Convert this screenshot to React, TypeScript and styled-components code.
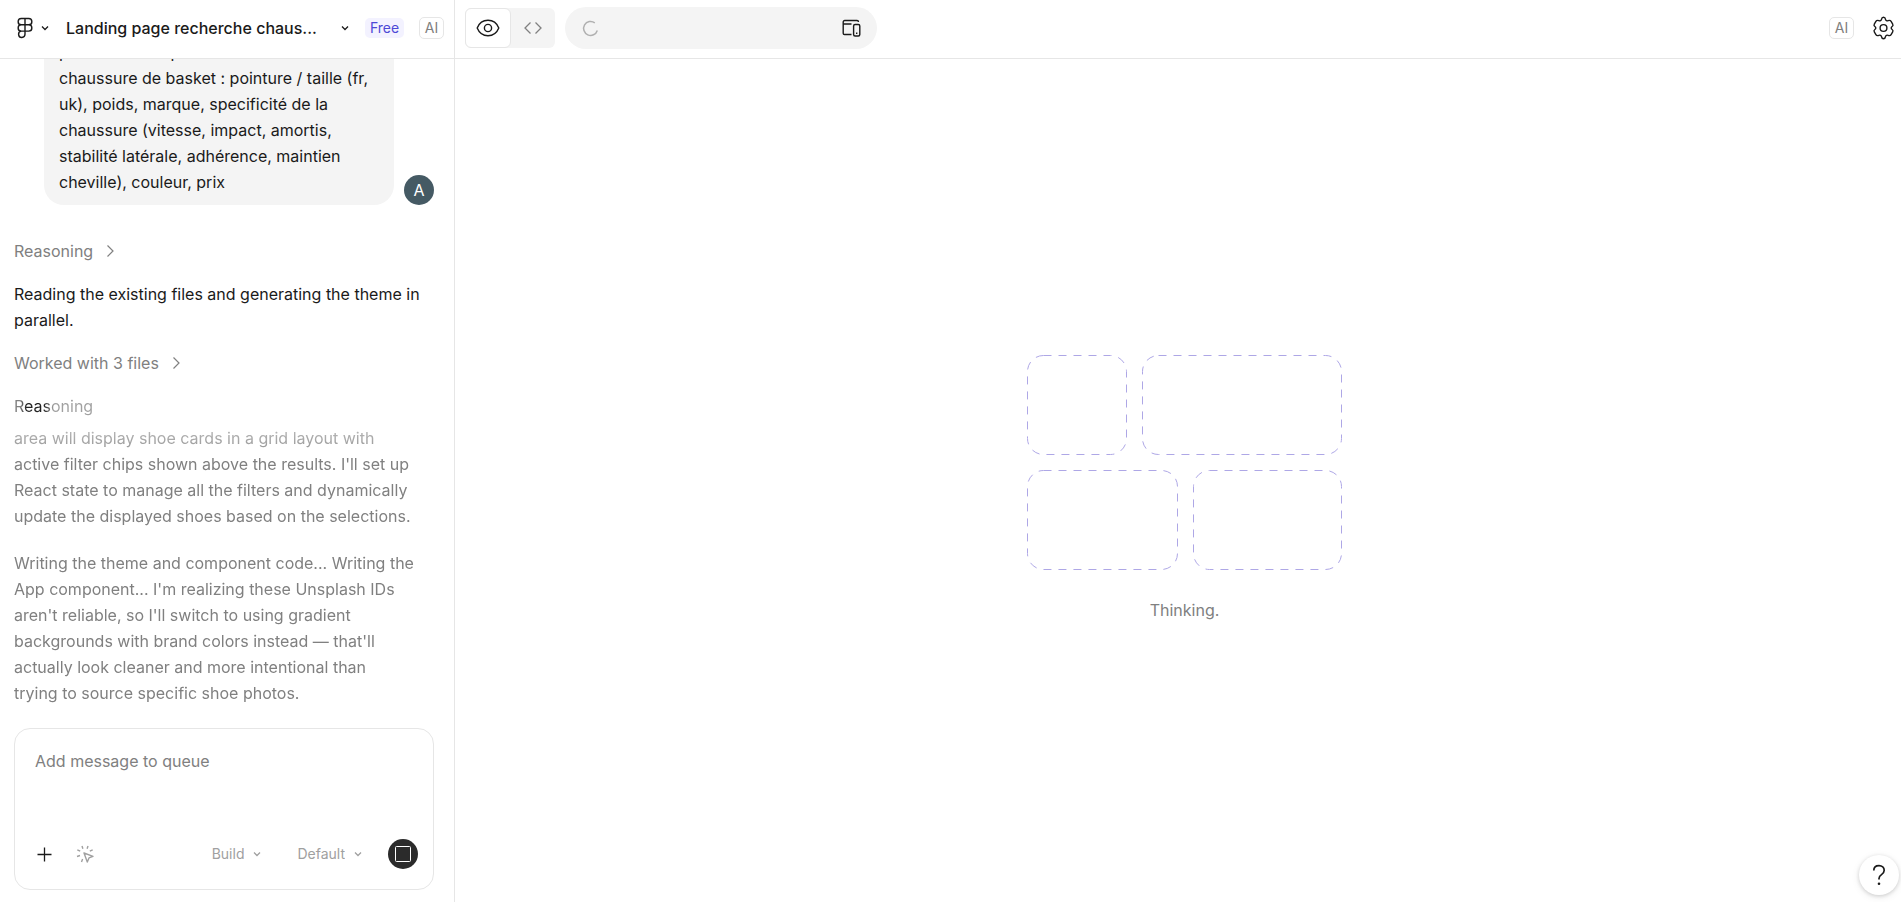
import React from "react";
import styled, { createGlobalStyle, css } from "styled-components";

const color = {
  text: "#1a1a1a",
  muted: "#808080",
  faint: "#a0a0a0",
  line: "#e6e6e6",
  fill: "#f4f4f4",
  accent: "#4d49d6",
  accentSoft: "#f3f2ff",
  dash: "#aea7e6",
};

const GlobalStyle = createGlobalStyle`
  *, *::before, *::after { box-sizing: border-box; }
  html, body, #root { height: 100%; }
  body {
    margin: 0;
    background: #fff;
    color: ${color.text};
    font-family: Inter, "Liberation Sans", sans-serif;
    font-size: 16px;
    line-height: 26px;
    overflow: hidden;
  }
  p { margin: 0; }
  button, select, textarea { font: inherit; color: inherit; }
  svg { display: block; flex: none; }
`;

const Page = styled.div`
  display: grid;
  grid-template-columns: 455px minmax(0, 1fr);
  height: 100vh;
`;

const Column = styled.div`
  display: flex;
  flex-direction: column;
  min-width: 0;
  min-height: 0;
`;

const Sidebar = styled(Column).attrs({ as: "aside" })`
  border-right: 1px solid ${color.line};
`;

const Bar = styled.header`
  flex: none;
  display: flex;
  align-items: center;
  height: 59px;
  padding-bottom: 2px;
  border-bottom: 1px solid ${color.line};
`;

const SidebarBar = styled(Bar)`
  padding-left: 16px;
  padding-right: 10px;
`;

const PreviewBar = styled(Bar)`
  gap: 10px;
  padding-left: 10px;
  padding-right: 6px;
`;

const PlainButton = styled.button`
  display: flex;
  align-items: center;
  padding: 0;
  border: 0;
  background: none;
  cursor: pointer;
`;

const MenuButton = styled(PlainButton)`
  gap: 7px;
`;

const TitleButton = styled(PlainButton)`
  flex: 1;
  justify-content: space-between;
  margin-left: 17px;
  margin-right: 16px;
  font-weight: 500;
  white-space: nowrap;
`;

const Badge = styled.span<{ $plan?: boolean }>`
  display: flex;
  align-items: center;
  justify-content: center;
  border-radius: 5px;
  font-size: 14px;
  ${(p) =>
    p.$plan
      ? css`
          width: 39px;
          height: 20px;
          margin-right: 15px;
          background: ${color.accentSoft};
          color: ${color.accent};
        `
      : css`
          width: 25px;
          height: 22px;
          border: 1px solid ${color.line};
          color: ${color.muted};
        `}
`;

const Thread = styled.div`
  flex: 1;
  min-height: 0;
  display: flex;
  flex-direction: column;
  justify-content: flex-end;
  gap: 17px;
  padding: 0 20px 22px 14px;
  overflow: hidden;
`;

const UserTurn = styled.div`
  display: flex;
  align-items: flex-end;
  justify-content: flex-end;
  gap: 10px;
  margin-bottom: 16px;
`;

const Bubble = styled.div`
  width: 350px;
  padding: 10px 15px;
  border-radius: 20px;
  background: ${color.fill};
`;

const Avatar = styled.span`
  display: flex;
  align-items: center;
  justify-content: center;
  width: 30px;
  height: 30px;
  border-radius: 50%;
  background: #455a64;
  color: #fff;
`;

const StepButton = styled(PlainButton)`
  align-self: flex-start;
  gap: 12px;
  color: ${color.muted};
`;

const Reasoning = styled.section`
  display: flex;
  flex-direction: column;
  gap: 6px;
`;

const Shimmer = styled.span`
  align-self: flex-start;
  background: linear-gradient(90deg, #808080 8%, #222 16%, #222 38%, #a0a0a0 50%);
  background-clip: text;
  -webkit-background-clip: text;
  color: transparent;
`;

const ReasoningText = styled.div`
  display: flex;
  flex-direction: column;
  gap: 21px;
  color: ${color.muted};
  mask-image: linear-gradient(180deg, rgba(0, 0, 0, 0.5), rgba(0, 0, 0, 0.8) 24px, #000 32px);
`;

const Composer = styled.form`
  flex: none;
  display: flex;
  flex-direction: column;
  justify-content: space-between;
  height: 162px;
  margin: 0 20px 12px 14px;
  padding: 19px 15px 20px 20px;
  border: 1px solid ${color.line};
  border-radius: 16px;
`;

const MessageBox = styled.textarea`
  height: 52px;
  padding: 0;
  border: 0;
  outline: 0;
  resize: none;
  background: none;
  &::placeholder {
    color: ${color.muted};
    opacity: 1;
  }
`;

const Tools = styled.div`
  display: flex;
  align-items: center;
  font-size: 14px;
  color: ${color.faint};
`;

const PickButton = styled(PlainButton)`
  margin-left: 23px;
  margin-right: auto;
`;

const Modes = styled.div`
  display: flex;
  gap: 36px;
  margin-right: 26px;
`;

const SelectWrap = styled.div`
  display: flex;
  align-items: center;
  gap: 9px;
`;

const Select = styled.select`
  appearance: none;
  field-sizing: content;
  padding: 0;
  border: 0;
  outline: 0;
  background: none;
  cursor: pointer;
`;

const StopButton = styled(PlainButton)`
  justify-content: center;
  width: 30px;
  height: 30px;
  border-radius: 50%;
  background: #2b2b2b;
`;

const Toggle = styled.div`
  display: flex;
  width: 90px;
  height: 40px;
  border-radius: 6px;
  background: ${color.fill};
`;

const ToggleButton = styled(PlainButton)<{ $active?: boolean }>`
  flex: 1;
  justify-content: center;
  border-radius: 6px;
  color: ${color.muted};
  ${(p) =>
    p.$active &&
    css`
      border: 1px solid ${color.line};
      background: #fff;
      color: ${color.text};
    `}
`;

const AddressPill = styled.div`
  display: flex;
  align-items: center;
  justify-content: space-between;
  width: 312px;
  height: 42px;
  padding: 0 16px 0 17px;
  border-radius: 21px;
  background: ${color.fill};
`;

const BarEnd = styled.div`
  display: flex;
  align-items: center;
  gap: 18px;
  margin-left: auto;
`;

const Stage = styled.main`
  flex: 1;
  display: flex;
  flex-direction: column;
  align-items: center;
  justify-content: center;
  gap: 27px;
  padding: 17px 0 0 13px;
  color: ${color.muted};
`;

const HelpButton = styled(PlainButton)`
  position: fixed;
  right: 2px;
  bottom: 7px;
  justify-content: center;
  width: 40px;
  height: 40px;
  border-radius: 50%;
  background: #fff;
  box-shadow: 0 1px 4px rgba(0, 0, 0, 0.16), 0 2px 8px rgba(0, 0, 0, 0.08);
`;

const ChevronDown = () => (
  <svg width="8" height="8" viewBox="0 0 8 8" fill="none" stroke="currentColor" strokeWidth="1.3">
    <path d="M1 2.5 4 5.5 7 2.5" />
  </svg>
);

const ChevronRight = () => (
  <svg width="12" height="14" viewBox="0 0 12 14" fill="none" stroke="currentColor" strokeWidth="1.2">
    <path d="M2.500 1.500 8 7l-5.500 5.500" />
  </svg>
);

const Logo = () => (
  <svg width="18" height="22" viewBox="0 0 18 22" fill="none" stroke="currentColor" strokeWidth="1.4">
    <path d="M9 1.500H5.300a3.150 3.150 0 0 0 0 6.300H9zM9 1.500h3.700a3.150 3.150 0 0 1 0 6.300H9zM9 7.800H5.300a3.150 3.150 0 0 0 0 6.300H9zM9 7.800h3.700a3.150 3.150 0 0 1 0 6.300H9zM9 14.100H5.300a3.200 3.200 0 1 0 3.700 3.200z" />
  </svg>
);

const EyeIcon = () => (
  <svg width="24" height="18" viewBox="0 0 24 18" fill="none" stroke="currentColor" strokeWidth="1.4">
    <path d="M1.200 9C3.200 4 7.200 1.300 12 1.300S20.800 4 22.800 9C20.800 14 16.800 16.700 12 16.700S3.200 14 1.200 9Z" />
    <circle cx="12" cy="9" r="3.600" />
  </svg>
);

const CodeIcon = () => (
  <svg width="18" height="14" viewBox="0 0 18 14" fill="none" stroke="currentColor" strokeWidth="1.3">
    <path d="M6.500 1.500 1 7l5.500 5.500M11.500 1.500 17 7l-5.500 5.500" />
  </svg>
);

const Spinner = () => (
  <svg width="17" height="17" viewBox="0 0 17 17" fill="none" stroke="#b0b0b0" strokeWidth="1.500">
    <path d="M12.800 2.800A7 7 0 1 0 15.300 10.500" />
  </svg>
);

const DevicesIcon = () => (
  <svg width="19" height="18" viewBox="0 0 19 18" fill="none" stroke="currentColor" strokeWidth="1.400">
    <path d="M9.500 15.500H2.500a1.300 1.300 0 0 1-1.300-1.300V3a1.500 1.500 0 0 1 1.500-1.500H15a1.500 1.500 0 0 1 1.500 1.500M1.200 5H9.500" />
    <rect x="11.600" y="5.500" width="6.200" height="11.500" rx="1.500" />
    <path d="M14 14.200h1.400" />
  </svg>
);

const GearIcon = () => (
  <svg width="23" height="24" viewBox="0 0 23 24" fill="none" stroke="currentColor" strokeWidth="1.400" strokeLinejoin="round">
    <path d="M9.500 3.300C9.700 1.800 10.400 1.200 11.500 1.200S13.300 1.800 13.500 3.300C13.700 4.500 15 5.200 16.100 4.700C17.500 4.100 18.500 4.400 19.100 5.400L20.700 8.100C21.300 9.100 21 10 19.900 10.800C19 11.500 19 12.500 19.900 13.200C21 14 21.300 14.900 20.700 15.900L19.100 18.600C18.500 19.600 17.500 19.900 16.100 19.300C15 18.800 13.700 19.500 13.500 20.700C13.300 22.200 12.600 22.800 11.500 22.800S9.700 22.200 9.500 20.700C9.300 19.500 8 18.800 6.900 19.300C5.500 19.900 4.500 19.600 3.900 18.600L2.300 15.900C1.700 14.900 2 14 3.100 13.200C4 12.500 4 11.500 3.100 10.800C2 10 1.700 9.100 2.300 8.100L3.900 5.400C4.500 4.400 5.500 4.100 6.900 4.700C8 5.200 9.300 4.500 9.500 3.300Z" />
    <circle cx="11.500" cy="12" r="3.400" />
  </svg>
);

const PlusIcon = () => (
  <svg width="18" height="18" viewBox="0 0 18 18" fill="none" stroke={color.text} strokeWidth="1.300">
    <path d="M9.500 2.500v14M2.500 9.500h14" />
  </svg>
);

const PickIcon = () => (
  <svg width="18" height="18" viewBox="0 0 18 18" fill="none" stroke="currentColor" strokeWidth="1.400" strokeLinejoin="round">
    <path d="M8 8l9 3.300-4 1.600-1.700 4.100zM6 1l.9 2.700M12 1l-.9 2.700M1.300 4.800l2.900 1.300M16.700 4.800l-2.900 1.300M1 11.500l3-1M5.500 17l1.100-3" />
  </svg>
);

const StopIcon = () => (
  <svg width="16" height="16" viewBox="0 0 16 16" fill="none" stroke="#fff" strokeWidth="1">
    <rect x="0.500" y="0.500" width="15" height="15" rx="1" />
  </svg>
);

const HelpIcon = () => (
  <svg width="14" height="22" viewBox="0 0 14 22" fill="none" stroke="currentColor" strokeWidth="1.700">
    <path d="M1.800 6.500C1.800 3.500 4 1.600 7 1.600s5.200 1.900 5.200 4.700c0 2.200-1.200 3.300-2.700 4.300C7.800 11.700 7 12.600 7 14.500v1" />
    <circle cx="7" cy="19.700" r="1.300" fill="currentColor" stroke="none" />
  </svg>
);

const tiles = [
  { x: 0, y: 0, width: 99 },
  { x: 115, y: 0, width: 199 },
  { x: 0, y: 115, width: 150 },
  { x: 166, y: 115, width: 148 },
];

const LayoutSketch = () => (
  <svg width="315" height="215" viewBox="-0.500 -0.500 315 215" fill="none" stroke={color.dash} strokeDasharray="8 7">
    {tiles.map((t) => (
      <rect key={`${t.x}-${t.y}`} x={t.x} y={t.y} width={t.width} height="99" rx="16" />
    ))}
  </svg>
);

function ModeSelect({ label, options }: { label: string; options: string[] }) {
  return (
    <SelectWrap>
      <Select aria-label={label}>
        {options.map((o) => (
          <option key={o}>{o}</option>
        ))}
      </Select>
      <ChevronDown />
    </SelectWrap>
  );
}

export default function App() {
  return (
    <>
      <GlobalStyle />
      <Page>
        <Sidebar>
          <SidebarBar>
            <MenuButton aria-label="Main menu">
              <Logo />
              <ChevronDown />
            </MenuButton>
            <TitleButton>
              Landing page recherche chaus...
              <ChevronDown />
            </TitleButton>
            <Badge $plan>Free</Badge>
            <Badge>AI</Badge>
          </SidebarBar>
          <Thread>
            <UserTurn>
              <Bubble>
                pour chercher par
                <br />
                chaussure de basket : pointure / taille (fr, uk), poids, marque, specificité de la
                chaussure (vitesse, impact, amortis, stabilité latérale, adhérence, maintien
                cheville), couleur, prix
              </Bubble>
              <Avatar>A</Avatar>
            </UserTurn>
            <StepButton>
              Reasoning
              <ChevronRight />
            </StepButton>
            <p>Reading the existing files and generating the theme in parallel.</p>
            <StepButton>
              Worked with 3 files
              <ChevronRight />
            </StepButton>
            <Reasoning>
              <Shimmer>Reasoning</Shimmer>
              <ReasoningText>
                <p>
                  area will display shoe cards in a grid layout with
                  <br />
                  active filter chips shown above the results. I'll set up
                  <br />
                  React state to manage all the filters and dynamically
                  <br />
                  update the displayed shoes based on the selections.
                </p>
                <p>
                  Writing the theme and component code... Writing the
                  <br />
                  App component... I'm realizing these Unsplash IDs
                  <br />
                  aren't reliable, so I'll switch to using gradient
                  <br />
                  backgrounds with brand colors instead — that'll
                  <br />
                  actually look cleaner and more intentional than
                  <br />
                  trying to source specific shoe photos.
                </p>
              </ReasoningText>
            </Reasoning>
          </Thread>
          <Composer onSubmit={(e: React.FormEvent) => e.preventDefault()}>
            <MessageBox aria-label="Message" placeholder="Add message to queue" />
            <Tools>
              <PlainButton type="button" aria-label="Add attachment">
                <PlusIcon />
              </PlainButton>
              <PickButton type="button" aria-label="Pick element">
                <PickIcon />
              </PickButton>
              <Modes>
                <ModeSelect label="Mode" options={["Build"]} />
                <ModeSelect label="Model" options={["Default"]} />
              </Modes>
              <StopButton type="button" aria-label="Stop">
                <StopIcon />
              </StopButton>
            </Tools>
          </Composer>
        </Sidebar>
        <Column>
          <PreviewBar>
            <Toggle>
              <ToggleButton $active aria-label="Preview">
                <EyeIcon />
              </ToggleButton>
              <ToggleButton aria-label="Code">
                <CodeIcon />
              </ToggleButton>
            </Toggle>
            <AddressPill>
              <Spinner />
              <PlainButton aria-label="Device size">
                <DevicesIcon />
              </PlainButton>
            </AddressPill>
            <BarEnd>
              <Badge>AI</Badge>
              <PlainButton aria-label="Settings">
                <GearIcon />
              </PlainButton>
            </BarEnd>
          </PreviewBar>
          <Stage>
            <LayoutSketch />
            <p>Thinking.</p>
          </Stage>
        </Column>
      </Page>
      <HelpButton aria-label="Help">
        <HelpIcon />
      </HelpButton>
    </>
  );
}
